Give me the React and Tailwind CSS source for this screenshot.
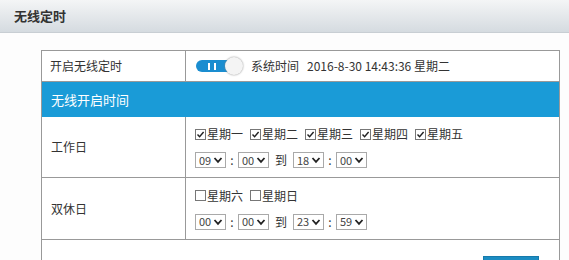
import React from 'react';

const font = { fontFamily: '"Noto Sans CJK SC", "Noto Sans", sans-serif' };

const Check = ({ checked, label }) => (
    <span className="flex items-center mr-[7px]">
        <span className="w-[11px] h-[11px] border border-[#777] bg-white flex items-center justify-center mr-[1px]">
            {checked && (
                <svg width="9" height="9" viewBox="0 0 9 9">
                    <path d="M1.5 4.5 L3.6 6.8 L7.6 2" fill="none" stroke="#222" strokeWidth="1.4" />
                </svg>
            )}
        </span>
        <span>{label}</span>
    </span>
);

const Sel = ({ value }) => (
    <span className="w-[31px] h-[16px] border border-[#a9a9a9] bg-white flex items-center justify-between pl-[3px] pr-[2px] text-[11px] leading-none text-[#444]">
        <span>{value}</span>
        <svg width="10" height="8" viewBox="0 0 10 8">
            <path d="M1.5 2 L5 5.8 L8.5 2" fill="none" stroke="#222" strokeWidth="1.8" />
        </svg>
    </span>
);

const TimeRow = ({ a, b, c, d }) => (
    <div className="flex items-center mt-[8px]">
        <Sel value={a} />
        <span className="w-[12px] text-center">:</span>
        <Sel value={b} />
        <span className="w-[24px] text-center">到</span>
        <Sel value={c} />
        <span className="w-[12px] text-center">:</span>
        <Sel value={d} />
    </div>
);

const App = () => {
    return (
        <div className="w-[569px] h-[260px] overflow-hidden bg-[#fdfdfd] text-[12px] text-[#333]" style={font}>
            <div className="h-[33px] bg-gradient-to-b from-[#f4f5f6] to-[#d5dbe0] border-b border-[#c8ced3] flex items-center pl-[14px]">
                <span className="text-[13px] font-bold text-[#333]">无线定时</span>
            </div>
            <div className="pt-[17px] pl-[41px]">
                <div className="w-[519px] border border-[#999] border-b-0">
                    <div className="flex h-[31px] border-b border-[#999] bg-white">
                        <div className="w-[144px] border-r border-[#999] flex items-center pl-[8px]">开启无线定时</div>
                        <div className="flex-1 flex items-center pl-[10px]">
                            <span className="relative w-[47px] h-[18px] flex items-center">
                                <span className="w-[40px] h-[12px] rounded-full bg-[#1a8dd0] flex items-center pl-[12px] gap-[4px]">
                                    <span className="w-[2px] h-[7px] bg-white" />
                                    <span className="w-[2px] h-[7px] bg-white" />
                                </span>
                                <span className="absolute right-0 top-0 w-[18px] h-[18px] rounded-full bg-[#f4f4f4] shadow-[0_0_2px_#888]" />
                            </span>
                            <span className="ml-[8px]">系统时间</span>
                            <span className="ml-[8px]">2016-8-30 14:43:36 星期二</span>
                        </div>
                    </div>
                    <div className="h-[35px] bg-[#1a9bd7] text-white text-[13px] flex items-center pl-[9px]">无线开启时间</div>
                    <div className="flex h-[61px] border-b border-[#999] bg-white">
                        <div className="w-[144px] border-r border-[#999] flex items-center pl-[9px]">工作日</div>
                        <div className="flex-1 flex flex-col justify-center pl-[9px]">
                            <div className="flex items-center">
                                <Check checked label="星期一" />
                                <Check checked label="星期二" />
                                <Check checked label="星期三" />
                                <Check checked label="星期四" />
                                <Check checked label="星期五" />
                            </div>
                            <TimeRow a="09" b="00" c="18" d="00" />
                        </div>
                    </div>
                    <div className="flex h-[62px] border-b border-[#999] bg-white">
                        <div className="w-[144px] border-r border-[#999] flex items-center pl-[9px]">双休日</div>
                        <div className="flex-1 flex flex-col justify-center pl-[9px]">
                            <div className="flex items-center">
                                <Check label="星期六" />
                                <Check label="星期日" />
                            </div>
                            <TimeRow a="00" b="00" c="23" d="59" />
                        </div>
                    </div>
                    <div className="h-[40px] bg-white flex justify-end pr-[20px] pt-[16px]">
                        <span className="w-[56px] h-[24px] bg-[#1b8cc2] border border-[#167aab]" />
                    </div>
                </div>
            </div>
        </div>
    );
};

export default App;
